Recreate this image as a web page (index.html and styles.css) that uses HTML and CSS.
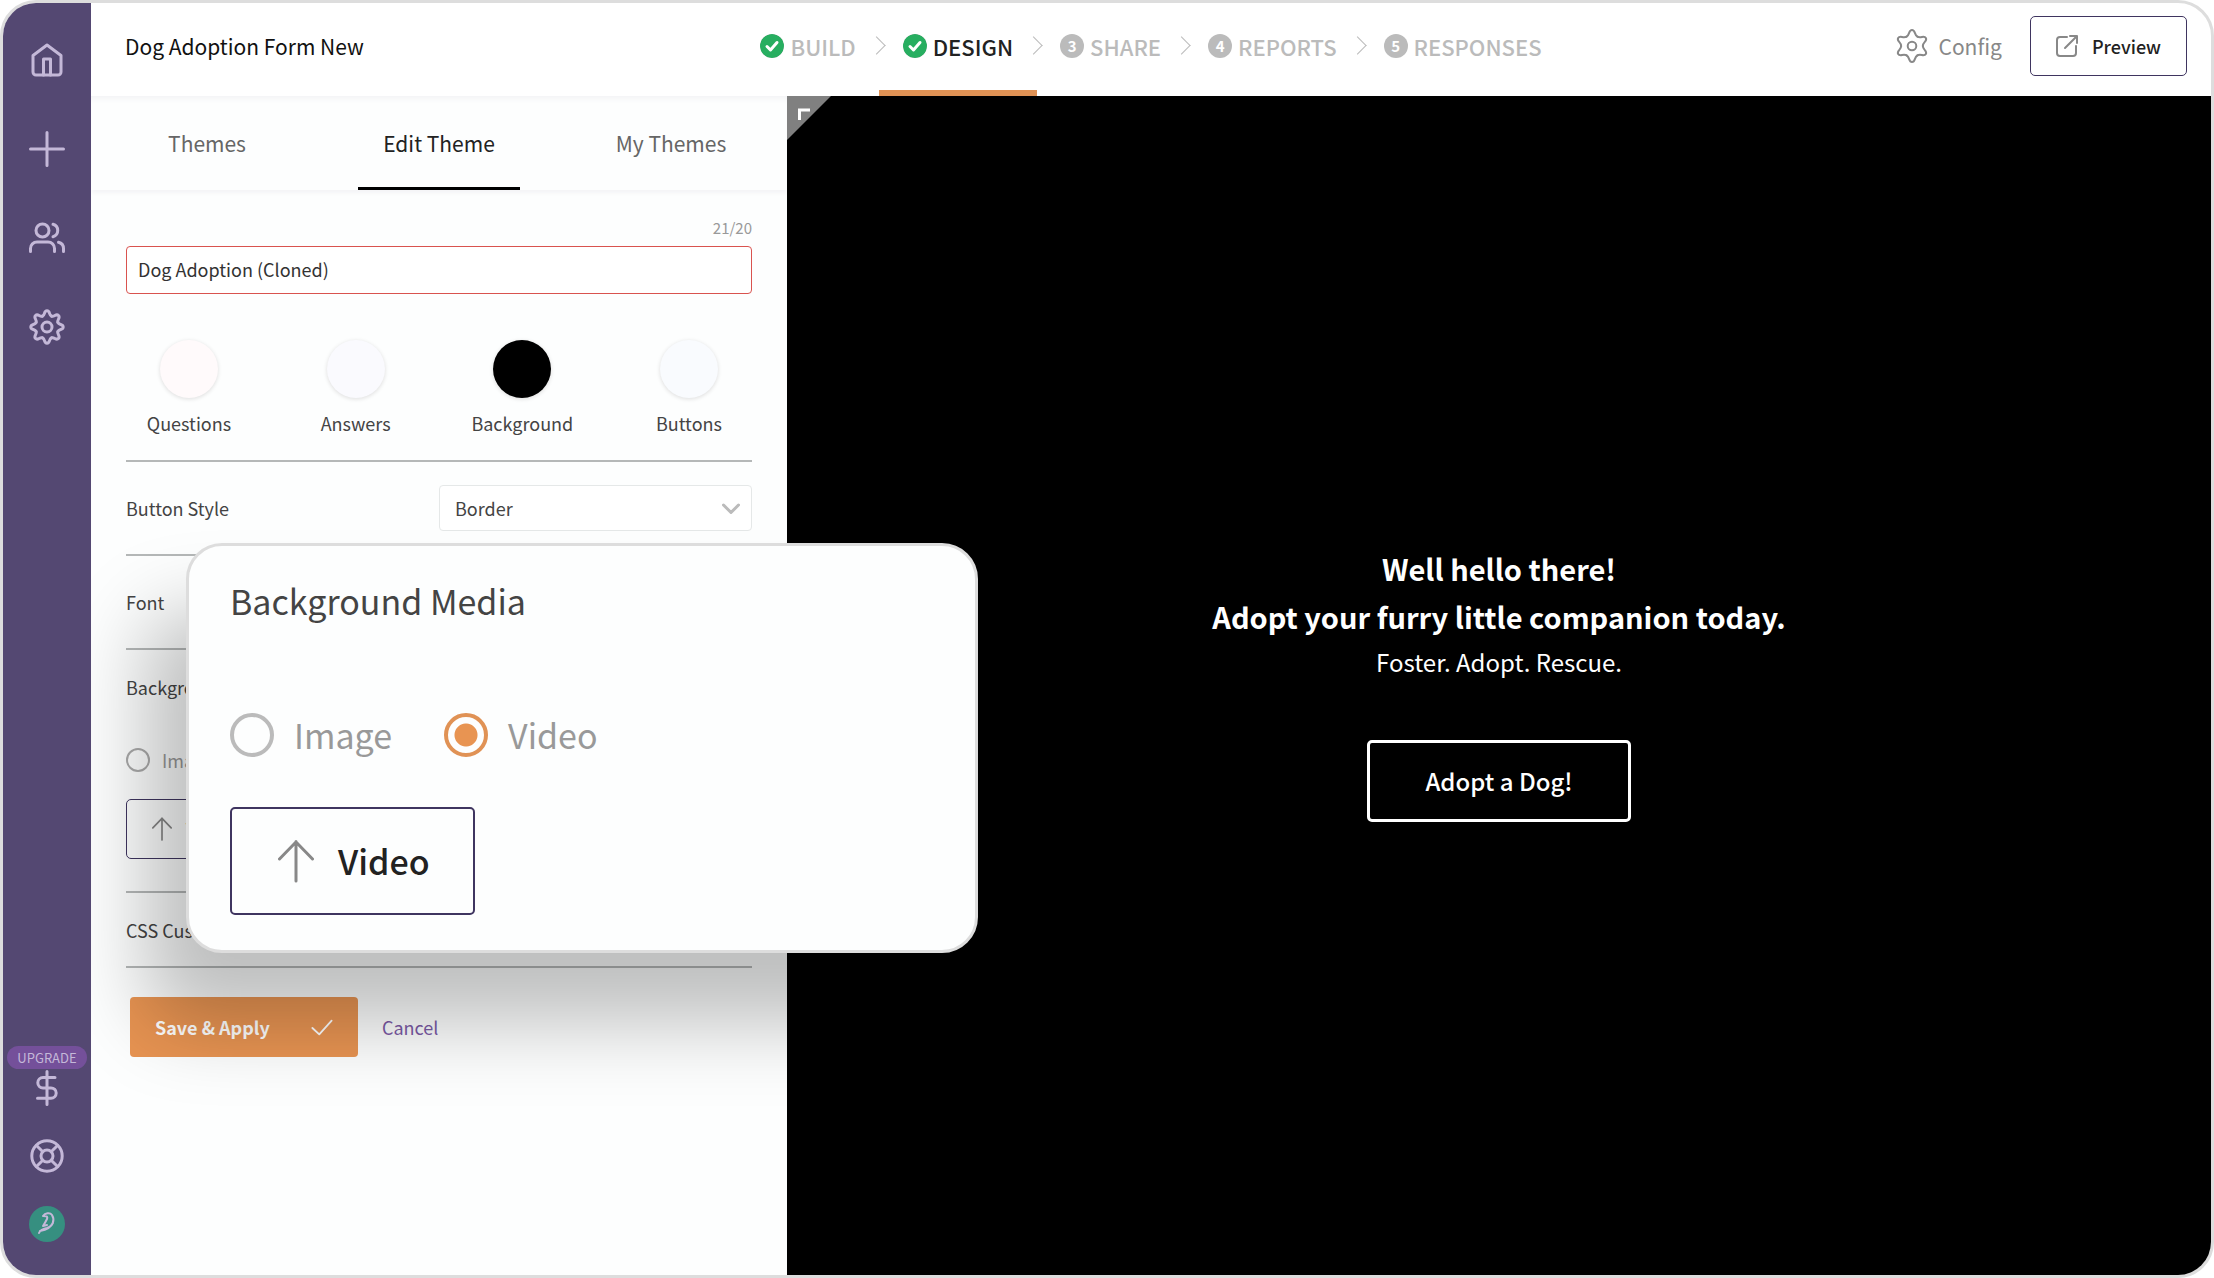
FILE: index.html
```html
<!DOCTYPE html>
<html lang="en">
<head>
<meta charset="utf-8">
<title>Dog Adoption Form New</title>
<link rel="stylesheet" href="styles.css">
</head>
<body>
<svg class="defs" aria-hidden="true">
  <defs>
    <path id="lobe8" d="M-4.5-10.9C-1.7-12-3.4-16.2 0-16.2S1.7-12 4.5-10.9"/>
    <path id="lobe6" d="M-5.4-9.4C-2-11.3-3.6-16 0-16S2-11.3 5.4-9.4"/>
    <path id="tick" d="M7 12.5l3.500 3.500 6.500-7.500"/>
  </defs>
</svg>
<div class="app">
  <nav class="sidebar" aria-label="Main">
    <div class="side-group side-top">
      <a class="side-link" href="#home" aria-label="Home"><svg class="icon" viewBox="0 0 36 36"><path d="M4 13.500L18 3l14 10.500V30a3 3 0 0 1-3 3H7a3 3 0 0 1-3-3z"/><path d="M14.500 33V17h7v16"/></svg></a>
      <a class="side-link" href="#new" aria-label="New"><svg class="icon" viewBox="0 0 36 36"><path d="M18 1.500v33M1.500 18h33"/></svg></a>
      <a class="side-link" href="#team" aria-label="Team"><svg class="icon" viewBox="0 0 36 36"><circle cx="13.500" cy="10.500" r="6.500"/><path d="M1.500 31.500v-3a6.500 6.500 0 0 1 6.500-6.500h11a6.500 6.500 0 0 1 6.500 6.500v3M24 4.300a6.500 6.500 0 0 1 0 12.500M29.500 22.300a6.500 6.500 0 0 1 5 6.200v3"/></svg></a>
      <a class="side-link" href="#settings" aria-label="Settings"><svg class="icon" viewBox="-18 -18 36 36"><circle r="5"/><use href="#lobe8"/><use href="#lobe8" transform="rotate(45)"/><use href="#lobe8" transform="rotate(90)"/><use href="#lobe8" transform="rotate(135)"/><use href="#lobe8" transform="rotate(180)"/><use href="#lobe8" transform="rotate(225)"/><use href="#lobe8" transform="rotate(270)"/><use href="#lobe8" transform="rotate(315)"/></svg></a>
    </div>
    <div class="side-group side-bottom">
      <a class="upgrade" href="#upgrade"><span class="pill">UPGRADE</span><svg class="icon" viewBox="0 0 36 36"><path d="M18 1.500v33M26 7.500H14a5.200 5.200 0 0 0 0 10.400h8a5.200 5.200 0 0 1 0 10.400H8.500"/></svg></a>
      <a class="side-help" href="#help" aria-label="Help"><svg class="icon" viewBox="0 0 36 36"><circle cx="18" cy="18" r="15.200"/><circle cx="18" cy="18" r="6"/><path d="M7.500 7.500l6.300 6.300M22.200 22.200l6.300 6.300M28.500 7.500l-6.300 6.300M13.800 22.200l-6.300 6.300"/></svg></a>
      <a class="avatar" href="#account" aria-label="Account"><svg viewBox="0 0 36 36"><path d="M14 10c2-3 7-4 9-1 3 5 1 11-5 13-4 1-7 2-8 5M14 10c3 0 5 0 4 3-1 2-2 4-4 7l4-1M11 25c6-1 11-3 13-8"/></svg></a>
    </div>
  </nav>

  <div class="main">
    <header class="topbar">
      <h1 class="form-title">Dog Adoption Form New</h1>
      <ol class="steps">
        <li><a class="step done" href="#build"><svg class="badge" viewBox="0 0 24 24"><circle cx="12" cy="12" r="12"/><use href="#tick"/></svg>BUILD</a></li>
        <li><a class="step done current" href="#design" aria-current="step"><svg class="badge" viewBox="0 0 24 24"><circle cx="12" cy="12" r="12"/><use href="#tick"/></svg>DESIGN</a></li>
        <li><a class="step" href="#share"><span class="badge">3</span>SHARE</a></li>
        <li><a class="step" href="#reports"><span class="badge">4</span>REPORTS</a></li>
        <li><a class="step" href="#responses"><span class="badge">5</span>RESPONSES</a></li>
      </ol>
      <div class="actions">
        <a class="config" href="#config"><svg class="config-icon" viewBox="-18 -18 36 36"><circle r="4.300"/><use href="#lobe6"/><use href="#lobe6" transform="rotate(60)"/><use href="#lobe6" transform="rotate(120)"/><use href="#lobe6" transform="rotate(180)"/><use href="#lobe6" transform="rotate(240)"/><use href="#lobe6" transform="rotate(300)"/></svg>Config</a>
        <button class="outline-btn preview-btn" type="button"><svg class="open-icon" viewBox="0 0 22 22"><path d="M11 2H4a3 3 0 0 0-3 3v13a3 3 0 0 0 3 3h13a3 3 0 0 0 3-3v-7M9 13L20.500 1.500M14 1h7v7"/></svg>Preview</button>
      </div>
    </header>

    <div class="workspace">
      <section class="panel">
        <nav class="tabs" aria-label="Theme views">
          <a class="tab" href="#themes">Themes</a>
          <a class="tab active" href="#edit" aria-current="page">Edit Theme</a>
          <a class="tab" href="#mine">My Themes</a>
        </nav>
        <form class="editor">
          <div class="name-field">
            <span class="counter">21/20</span>
            <input class="name-input" type="text" aria-label="Theme name" value="Dog Adoption (Cloned)">
          </div>
          <div class="swatches">
            <button class="swatch" type="button"><span class="dot questions"></span>Questions</button>
            <button class="swatch" type="button"><span class="dot answers"></span>Answers</button>
            <button class="swatch" type="button"><span class="dot background"></span>Background</button>
            <button class="swatch" type="button"><span class="dot buttons"></span>Buttons</button>
          </div>
          <div class="row style-row">
            <label for="button-style">Button Style</label>
            <span class="select-wrap">
              <select id="button-style"><option>Border</option></select>
              <svg class="chevron" viewBox="0 0 18 12"><path d="M1.500 2L9 9.500 16.500 2"/></svg>
            </span>
          </div>
          <div class="row font-row">Font</div>
          <fieldset class="media-row">
            <legend class="media-title">Background Media</legend>
            <label class="choice"><input type="radio" name="media">Image</label>
            <button class="outline-btn upload" type="button"><svg class="arrow" viewBox="0 0 36 42"><path d="M18 41V1.500M1.500 19L18 2l16.500 17"/></svg>Video</button>
          </fieldset>
          <div class="row css-row">CSS Customization</div>
          <div class="form-actions">
            <button class="save" type="submit">Save &amp; Apply<svg class="save-tick" viewBox="0 0 24 18"><path d="M1.500 9.500l7.500 7L22.500 1.500"/></svg></button>
            <a class="cancel" href="#cancel">Cancel</a>
          </div>
        </form>
      </section>

      <section class="preview">
        <button class="corner" type="button" aria-label="Expand"><svg viewBox="0 0 44 44"><path class="corner-fill" d="M0 0h44L0 44z"/><path class="corner-mark" d="M12.500 24V14H23"/></svg></button>
        <div class="welcome">
          <h2>Well hello there!<br>Adopt your furry little companion today.</h2>
          <p>Foster. Adopt. Rescue.</p>
          <button class="cta" type="button">Adopt a Dog!</button>
        </div>
      </section>

      <section class="callout">
        <h2 class="callout-title">Background Media</h2>
        <div class="callout-choices">
          <label class="big-choice"><input type="radio" name="media-large">Image</label>
          <label class="big-choice"><input type="radio" name="media-large" checked>Video</label>
        </div>
        <button class="outline-btn big-upload" type="button"><svg class="arrow" viewBox="0 0 36 42"><path d="M18 41V1.500M1.500 19L18 2l16.500 17"/></svg>Video</button>
      </section>
    </div>
  </div>
</div>
</body>
</html>
```
FILE: styles.css
```css
* { box-sizing: border-box; }
body {
  margin: 0;
  background: #fff;
  font: 18px/28px "Noto Sans CJK SC", "Open Sans", sans-serif;
  color: #444;
}
a { color: inherit; text-decoration: none; }
button, input, select { font: inherit; color: inherit; }
button { cursor: pointer; }
svg { display: block; fill: none; stroke: currentColor; stroke-linecap: round; stroke-linejoin: round; }
.defs { position: absolute; width: 0; height: 0; }

.app {
  display: flex;
  min-height: 100vh;
  border: 3px solid #ddd;
  border-radius: 36px;
  overflow: hidden;
}

/* Sidebar */
.sidebar {
  position: relative;
  z-index: 2;
  flex: 0 0 88px;
  display: flex;
  flex-direction: column;
  justify-content: space-between;
  padding: 39px 0 33px;
  background: #544872;
  color: #c4b8d8;
}
.side-group { display: flex; flex-direction: column; align-items: center; }
.side-top { gap: 53px; }
.side-bottom { gap: 32px; }
.icon { width: 36px; height: 36px; stroke-width: 3; }
.upgrade { display: flex; flex-direction: column; align-items: center; gap: 1px; }
.pill {
  padding: 0 10px;
  border-radius: 12px;
  background: #74509a;
  font-size: 13px;
  line-height: 23px;
}
.avatar svg {
  width: 36px;
  height: 36px;
  border-radius: 50%;
  background: #368f80;
  stroke-width: 2;
}

/* Top bar */
.main { flex: 1; min-width: 0; display: flex; flex-direction: column; }
.topbar {
  display: grid;
  grid-template-columns: 1fr auto 1fr;
  align-items: center;
  height: 93px;
  padding: 0 24px 8px;
}
.form-title { margin: 0; padding-left: 10px; font-size: 21px; line-height: 32px; font-weight: 400; color: #111; }
.steps {
  display: flex;
  align-self: stretch;
  margin: 0;
  padding: 0;
  list-style: none;
}
.steps li { display: flex; align-items: center; }
.steps li + li::before {
  content: "";
  width: 12px;
  height: 12px;
  margin: 0 20px 0 14px;
  border: solid #bbb;
  border-width: 1px 1px 0 0;
  transform: rotate(45deg);
}
.step {
  position: relative;
  display: flex;
  align-items: center;
  gap: 6px;
  height: 100%;
  font-size: 22px;
  font-weight: 500;
  color: #bbb;
}
.step.current { color: #222; }
.step.current::after {
  content: "";
  position: absolute;
  left: -24px;
  right: -24px;
  bottom: -8px;
  height: 6px;
  background: #e09255;
}
.badge {
  width: 24px;
  height: 24px;
  border-radius: 50%;
  background: #bbb;
  color: #fff;
  font-size: 15px;
  line-height: 24px;
  font-weight: 700;
  text-align: center;
  stroke-width: 3;
}
.badge circle { fill: #27ae60; stroke: none; }
.actions { display: flex; justify-content: flex-end; align-items: center; gap: 28px; }
.config { display: flex; align-items: center; gap: 8px; font-size: 21px; color: #888; }
.config-icon { width: 36px; height: 36px; stroke-width: 2; }
.outline-btn {
  display: flex;
  align-items: center;
  border: 1px solid #3f3560;
  border-radius: 5px;
  background: transparent;
  font-weight: 500;
  color: #222;
}
.outline-btn svg { color: #888; }
.preview-btn { gap: 14px; height: 60px; padding: 0 25px; }
.open-icon { width: 22px; height: 22px; stroke-width: 2; }

/* Workspace */
.workspace {
  position: relative;
  flex: 1;
  display: grid;
  grid-template-columns: 696fr 1424fr;
}
.panel { box-shadow: inset 0 6px 6px -4px #f1f1f3; background: #fdfefe; }
.tabs {
  display: grid;
  grid-template-columns: repeat(3, 1fr);
  justify-items: center;
  box-shadow: 0 4px 4px -1px #f4f4f6;
}
.tab {
  width: 162px;
  height: 94px;
  padding-top: 33px;
  font-size: 21px;
  text-align: center;
  color: #666;
}
.tab.active { border-bottom: 3px solid #000; color: #222; }

.editor { padding: 25px 35px; }
.name-field { display: flex; flex-direction: column; }
.counter { align-self: flex-end; margin-bottom: 5px; font-size: 15px; line-height: 26px; color: #999; }
.name-input {
  width: 100%;
  height: 48px;
  padding: 0 11px 2px;
  border: 1px solid #d9534f;
  border-radius: 4px;
  background: #fff;
  color: #333;
}
.swatches {
  display: flex;
  justify-content: space-between;
  padding: 46px 0 23px;
  border-bottom: 2px solid #b5b8b8;
}
.swatch {
  width: 126px;
  display: flex;
  flex-direction: column;
  align-items: center;
  gap: 11px;
  padding: 0;
  border: 0;
  background: none;
}
.dot { width: 58px; height: 58px; border-radius: 50%; box-shadow: 0 1px 4px #ddd; }
.questions { background: #fffafb; }
.answers { background: #fafafe; }
.background { background: #000; }
.buttons { background: #f9fbfe; }
.row {
  display: flex;
  align-items: center;
  justify-content: space-between;
  border-bottom: 2px solid #b5b8b8;
}
.style-row, .font-row { height: 94px; }
.css-row { height: 75px; }
.select-wrap { position: relative; width: 50%; }
.select-wrap select {
  display: block;
  appearance: none;
  width: 100%;
  height: 46px;
  padding: 0 15px;
  border: 1px solid #e5e8e8;
  border-radius: 4px;
  background: #fff;
}
.chevron {
  position: absolute;
  right: 12px;
  top: 18px;
  width: 18px;
  height: 12px;
  color: #bbb;
  stroke-width: 3;
  pointer-events: none;
}
.media-row {
  display: flex;
  flex-direction: column;
  align-items: flex-start;
  min-width: 0;
  margin: 0;
  padding: 23px 0 32px;
  border: 0;
  border-bottom: 2px solid #b5b8b8;
}
.media-title { float: left; padding: 0; margin-bottom: 45px; }
.choice { display: flex; align-items: center; gap: 12px; margin-bottom: 25px; color: #999; }
input[type="radio"] {
  appearance: none;
  width: 24px;
  height: 24px;
  margin: 0;
  border: 2px solid #aaa;
  border-radius: 50%;
}
.upload { gap: 14px; width: 156px; height: 60px; padding: 0 25px; }
.upload .arrow { width: 20px; height: 24px; stroke-width: 3; }
.form-actions { display: flex; align-items: center; gap: 24px; padding: 29px 4px; }
.save {
  display: flex;
  align-items: center;
  justify-content: space-between;
  width: 228px;
  height: 60px;
  padding: 0 25px;
  border: 0;
  border-radius: 4px;
  background: #e89452;
  font-weight: 700;
  color: #fff;
}
.save-tick { width: 22px; height: 17px; stroke-width: 2; }
.cancel { color: #7b5aa6; }

/* Live preview */
.preview {
  position: relative;
  z-index: 1;
  display: flex;
  align-items: center;
  justify-content: center;
  background: #000;
  color: #fff;
  text-align: center;
}
.corner { position: absolute; left: 0; top: 0; padding: 0; border: 0; background: none; }
.corner svg { width: 44px; height: 44px; }
.corner-fill { fill: #808080; stroke: none; }
.corner-mark { stroke: #fff; stroke-width: 3; stroke-linecap: butt; stroke-linejoin: miter; }
.welcome { display: flex; flex-direction: column; align-items: center; padding-bottom: 6px; }
.welcome h2 { margin: 0; font-size: 29px; line-height: 48px; font-weight: 700; }
.welcome p { margin: 0 0 56px; font-size: 24px; line-height: 44px; }
.cta {
  width: 264px;
  height: 82px;
  border: 3px solid #fff;
  border-radius: 5px;
  background: none;
  font-size: 24px;
  font-weight: 500;
}

/* Enlarged media card laid over the workspace */
.callout {
  position: absolute;
  z-index: 1;
  left: 95px;
  top: 447px;
  width: 792px;
  padding: 29px 41px 35px;
  border: 3px solid #ddd;
  border-radius: 36px;
  background: #fdfefe;
  box-shadow: -40px 70px 80px rgba(0, 0, 0, 0.25);
}
.callout-title { margin: 0 0 82px; font-size: 34px; line-height: 52px; font-weight: 400; }
.callout-choices { display: flex; gap: 52px; margin-bottom: 46px; }
.big-choice { display: flex; align-items: center; gap: 20px; font-size: 34px; line-height: 52px; color: #999; }
.big-choice input[type="radio"] { width: 44px; height: 44px; border: 4px solid #bbb; }
.big-choice input[type="radio"]:checked {
  border-color: #e09255;
  background: radial-gradient(circle, #e89452 11px, transparent 12px);
}
.big-upload { gap: 24px; height: 108px; padding: 0 43px 0 46px; border-width: 2px; font-size: 34px; }
.big-upload .arrow { width: 36px; height: 44px; stroke-width: 3; }
```
